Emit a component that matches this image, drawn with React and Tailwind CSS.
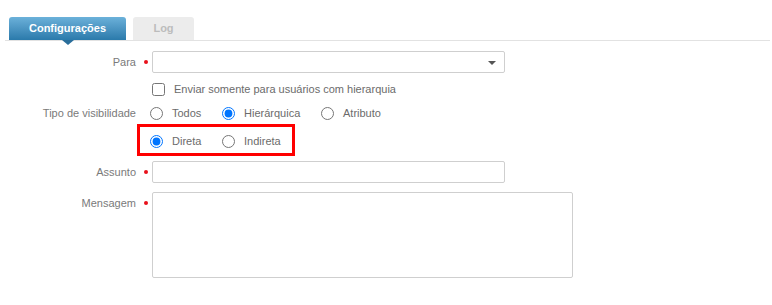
import { useState } from "react";

const font = { fontFamily: '"Liberation Sans", Arial, sans-serif' };

function Dot() {
  return (
    <div className="flex w-[15px] shrink-0 pl-[7px]">
      <span className="h-[4px] w-[4px] rounded-full bg-[#e8101a]" />
    </div>
  );
}

function Label({ children }) {
  return (
    <div className="w-[137px] shrink-0 pr-[1px] text-right text-[11px] text-[#7a7a7a]">
      {children}
    </div>
  );
}

function Radio({ name, label, checked, onChange, width }) {
  return (
    <label className={`flex items-center gap-[9px] ${width}`}>
      <input
        type="radio"
        name={name}
        checked={checked}
        onChange={onChange}
        className="m-0 h-[13px] w-[13px] shrink-0"
      />
      <span className="text-[11px] text-[#6b6b6b]">{label}</span>
    </label>
  );
}

export default function App() {
  const [tipo, setTipo] = useState("hierarquica");
  const [modo, setModo] = useState("direta");
  const [tab, setTab] = useState("config");

  return (
    <div className="h-[305px] w-[772px] bg-white pt-[17px]" style={font}>
      <div className="ml-[5px] mr-[2px] flex gap-[7px] border-b border-[#e2e2e2] pl-[4px]">
        <button
          type="button"
          onClick={() => setTab("config")}
          className="relative flex h-[23px] w-[117px] items-center justify-center rounded-t-[3px] bg-gradient-to-b from-[#6bb1da] to-[#2a7aab] text-[11px] font-bold text-white"
        >
          Configurações
          <span className="absolute left-1/2 top-full -ml-[6px] h-0 w-0 border-l-[6px] border-r-[6px] border-t-[5px] border-l-transparent border-r-transparent border-t-[#2a6e9b]" />
        </button>
        <button
          type="button"
          onClick={() => setTab("log")}
          className="flex h-[23px] w-[61px] items-center justify-center rounded-t-[3px] bg-[#ececec] text-[11px] font-bold text-[#bcbcbc]"
        >
          Log
        </button>
      </div>

      <div className="flex flex-col">
        <div className="mt-[10px] flex h-[22px] items-center">
          <Label>Para</Label>
          <Dot />
          <div className="relative h-[22px] w-[353px] rounded-[2px] border border-[#cfcfcf] bg-white">
            <span className="absolute right-[8px] top-[9px] h-0 w-0 border-l-[4px] border-r-[4px] border-t-[4px] border-l-transparent border-r-transparent border-t-[#555]" />
          </div>
        </div>

        <div className="mt-[9px] flex h-[14px] items-center pl-[152px]">
          <label className="flex items-center gap-[9px]">
            <input type="checkbox" className="m-0 h-[13px] w-[13px]" />
            <span className="text-[11px] text-[#6b6b6b]">
              Enviar somente para usuários com hierarquia
            </span>
          </label>
        </div>

        <div className="mt-[10px] flex h-[14px] items-center">
          <Label>Tipo de visibilidade</Label>
          <div className="flex pl-[13px]">
            <Radio name="tipo" label="Todos" width="w-[72px]" checked={tipo === "todos"} onChange={() => setTipo("todos")} />
            <Radio name="tipo" label="Hierárquica" width="w-[99px]" checked={tipo === "hierarquica"} onChange={() => setTipo("hierarquica")} />
            <Radio name="tipo" label="Atributo" width="" checked={tipo === "atributo"} onChange={() => setTipo("atributo")} />
          </div>
        </div>

        <div className="ml-[137px] mt-[4px] flex h-[32px] w-[158px] items-center border-[3px] border-[#ff0000] pl-[10px] pt-[2px]">
          <Radio name="modo" label="Direta" width="w-[72px]" checked={modo === "direta"} onChange={() => setModo("direta")} />
          <Radio name="modo" label="Indireta" width="" checked={modo === "indireta"} onChange={() => setModo("indireta")} />
        </div>

        <div className="mt-[5px] flex h-[22px] items-center">
          <Label>Assunto</Label>
          <Dot />
          <input className="h-[22px] w-[353px] rounded-[2px] border border-[#cfcfcf] bg-white px-1 text-[11px] outline-none" />
        </div>

        <div className="mt-[9px] flex">
          <div className="flex h-[22px] items-center">
            <Label>Mensagem</Label>
            <Dot />
          </div>
          <textarea className="h-[86px] w-[421px] resize-none rounded-[2px] border border-[#cfcfcf] bg-white px-1 text-[11px] outline-none" />
        </div>
      </div>
    </div>
  );
}
